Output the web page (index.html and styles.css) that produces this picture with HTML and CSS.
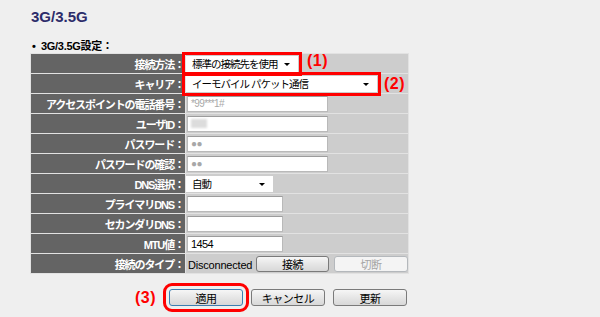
FILE: index.html
```html
<!DOCTYPE html>
<html lang="ja">
<head>
  <meta charset="UTF-8">
  <title>3G/3.5G</title>
  <link rel="stylesheet" href="styles.css">
</head>
<body>
<div class="page">
  <h1 class="title">3G/3.5G</h1>
  <div class="section"><span class="dot">•</span>3G/3.5G設定：</div>

  <table class="setting">
    <tr>
      <th>接続方法：</th>
      <td>
        <span class="mark"><span class="select w1"><span>標準の接続先を使用</span><i class="arrow"></i></span></span><span class="num n1">(1)</span>
      </td>
    </tr>
    <tr>
      <th>キャリア：</th>
      <td>
        <span class="mark"><span class="select w2"><span>イーモバイル パケット通信</span><i class="arrow"></i></span></span><span class="num n2">(2)</span>
      </td>
    </tr>
    <tr>
      <th>アクセスポイントの電話番号：</th>
      <td><span class="input w3 hint">*99***1#</span></td>
    </tr>
    <tr>
      <th>ユーザID：</th>
      <td><span class="input w3"><i class="blur"></i></span></td>
    </tr>
    <tr>
      <th>パスワード：</th>
      <td><span class="input w3 hint">●●</span></td>
    </tr>
    <tr>
      <th>パスワードの確認：</th>
      <td><span class="input w3 hint">●●</span></td>
    </tr>
    <tr>
      <th>DNS選択：</th>
      <td><span class="select w4"><span>自動</span><i class="arrow"></i></span></td>
    </tr>
    <tr>
      <th>プライマリDNS：</th>
      <td><span class="input w5"></span></td>
    </tr>
    <tr>
      <th>セカンダリDNS：</th>
      <td><span class="input w5"></span></td>
    </tr>
    <tr>
      <th>MTU値：</th>
      <td><span class="input w5">1454</span></td>
    </tr>
    <tr>
      <th>接続のタイプ：</th>
      <td>
        <div class="status">
          <span class="state">Disconnected</span>
          <span class="btn small">接続</span>
          <span class="btn small off">切断</span>
        </div>
      </td>
    </tr>
  </table>

  <div class="actions">
    <span class="num n3">(3)</span>
    <span class="btn big focus">適用</span>
    <span class="btn big">キャンセル</span>
    <span class="btn big">更新</span>
  </div>
</div>
</body>
</html>
```

FILE: styles.css
```css
* {
  margin: 0;
  padding: 0;
  box-sizing: border-box;
}

body {
  background: #efefef;
  font-family: "Liberation Sans", "Noto Sans CJK JP", sans-serif;
  font-size: 11px;
  color: #000;
}

.page {
  width: 600px;
  height: 317px;
  padding: 9px 0 0 30px;
}

.title {
  font-size: 15px;
  line-height: 16px;
  font-weight: bold;
  color: #2c2c6a;
  padding-left: 1px;
}

.section {
  margin-top: 16px;
  height: 11px;
  line-height: 11px;
  font-weight: bold;
  font-size: 11px;
  padding-left: 2px;
  letter-spacing: -0.3px;
}

.section .dot {
  display: inline-block;
  width: 9px;
}

/* 設定テーブル */
.setting {
  margin-top: 1px;
  width: 379px;
  border-collapse: separate;
  border-spacing: 1px;
  background: #e2e2e2;
}

.setting tr {
  height: 19px;
}

.setting th {
  width: 154px;
  background: #646464;
  color: #fff;
  font-weight: bold;
  text-align: right;
  padding: 0 1px 0 0;
  font-size: 11px;
  letter-spacing: -1.1px;
  white-space: nowrap;
}

.setting td {
  background: #cdcdcd;
  padding: 0;
  vertical-align: middle;
  white-space: nowrap;
  font-size: 0;
}

.select,
.input {
  display: inline-block;
  vertical-align: middle;
  height: 16px;
  line-height: 14px;
  background: #fff;
  font-size: 11px;
  letter-spacing: -0.6px;
  position: relative;
}

.select {
  padding-left: 5px;
  border: 1px solid #fff;
  font-size: 10.5px;
  letter-spacing: -1px;
}

.input {
  border: 1px solid #b9b9b9;
  border-top-color: #9c9c9c;
  padding-left: 3px;
  margin-left: 1px;
}

.hint {
  color: #a8a8a8;
  font-size: 10px;
}

.blur {
  display: inline-block;
  width: 16px;
  height: 9px;
  margin-top: 2px;
  background: #dcdcdc;
  filter: blur(1px);
}

.arrow {
  position: absolute;
  right: 7px;
  top: 6px;
  width: 0;
  height: 0;
  border-left: 3px solid transparent;
  border-right: 3px solid transparent;
  border-top: 3px solid #000;
}

.w1 { width: 112px; }
.w2 { width: 191px; }
.w3 { width: 141px; }
.w4 { width: 87px; }
.w5 { width: 96px; }

.mark {
  display: inline-block;
  vertical-align: middle;
  outline: 3px solid #f00;
  outline-offset: 1px;
  font-size: 0;
}

.num {
  display: inline-block;
  vertical-align: middle;
  color: #f00;
  font-family: "Liberation Sans", sans-serif;
  font-weight: bold;
  font-size: 16px;
  line-height: 16px;
  letter-spacing: 0.5px;
}

.n1 { margin-left: 9px; margin-top: -6px; }
.n2 { margin-left: 7px; }

/* 接続状態 */
.status {
  display: flex;
  align-items: center;
  gap: 5px;
  padding-left: 2px;
}

.state {
  width: 63px;
  font-size: 11px;
  letter-spacing: -0.2px;
  padding-top: 3px;
}

.btn {
  display: inline-flex;
  align-items: center;
  justify-content: center;
  font-size: 11px;
  letter-spacing: -0.5px;
  border: 1px solid #7a7a7a;
  border-radius: 3px;
  background: linear-gradient(#f6f6f6, #e6e6e6 50%, #d8d8d8);
  color: #000;
}

.btn.small {
  width: 73px;
  height: 16px;
}

.btn.off {
  width: 74px;
  color: #a4a4a4;
  border-color: #b4b8bc;
  background: #f4f4f4;
}

/* 下部ボタン */
.actions {
  display: flex;
  align-items: center;
  margin-top: 15px;
  padding-left: 105px;
  gap: 8px;
}

.n3 {
  margin-right: 5px;
}

.btn.big {
  width: 74px;
  height: 17px;
}

.btn.focus {
  border-color: #3c7fb1;
  outline: 3px solid #f00;
  outline-offset: 3px;
}
```
